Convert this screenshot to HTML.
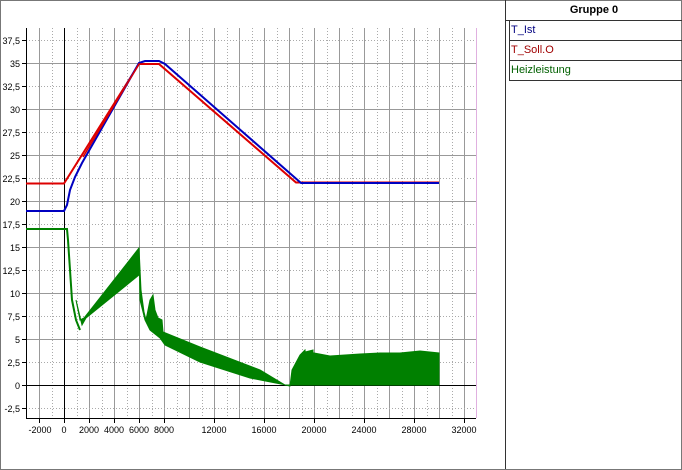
<!DOCTYPE html>
<html><head><style>
body{margin:0;width:682px;height:470px;background:#fff;overflow:hidden;font-family:"Liberation Sans",sans-serif;}
.frame{position:absolute;left:0;top:0;width:680px;height:468px;border:1px solid #777;}
.leg{position:absolute;left:505px;top:0;width:176px;height:469px;border-left:1px solid #333;}
.hd{height:20px;line-height:20px;text-align:center;font-weight:bold;font-size:11px;border-bottom:1px solid #333;}
.row{margin-left:3px;height:19px;line-height:19px;font-size:11px;border-bottom:1px solid #333;border-left:1px solid #333;padding-left:1px;}
</style></head><body>
<div class="frame"></div>
<svg width="682" height="470" style="position:absolute;left:0;top:0" font-family="Liberation Sans" font-size="9">
<g id="grid" stroke-width="1">
<!-- vertical -->
<g stroke="#999">
<line x1="39.5" y1="28" x2="39.5" y2="418"/><line x1="89.5" y1="28" x2="89.5" y2="418"/><line x1="114.5" y1="28" x2="114.5" y2="418"/><line x1="139.5" y1="28" x2="139.5" y2="418"/><line x1="164.5" y1="28" x2="164.5" y2="418"/><line x1="189.5" y1="28" x2="189.5" y2="418"/><line x1="214.5" y1="28" x2="214.5" y2="418"/><line x1="239.5" y1="28" x2="239.5" y2="418"/><line x1="264.5" y1="28" x2="264.5" y2="418"/><line x1="289.5" y1="28" x2="289.5" y2="418"/><line x1="314.5" y1="28" x2="314.5" y2="418"/><line x1="339.5" y1="28" x2="339.5" y2="418"/><line x1="364.5" y1="28" x2="364.5" y2="418"/><line x1="389.5" y1="28" x2="389.5" y2="418"/><line x1="414.5" y1="28" x2="414.5" y2="418"/><line x1="439.5" y1="28" x2="439.5" y2="418"/><line x1="464.5" y1="28" x2="464.5" y2="418"/>
</g>
<g stroke="#aaa" stroke-dasharray="1,2">
<line x1="52.5" y1="28" x2="52.5" y2="418"/><line x1="77.5" y1="28" x2="77.5" y2="418"/><line x1="102.5" y1="28" x2="102.5" y2="418"/><line x1="127.5" y1="28" x2="127.5" y2="418"/><line x1="152.5" y1="28" x2="152.5" y2="418"/><line x1="177.5" y1="28" x2="177.5" y2="418"/><line x1="202.5" y1="28" x2="202.5" y2="418"/><line x1="227.5" y1="28" x2="227.5" y2="418"/><line x1="252.5" y1="28" x2="252.5" y2="418"/><line x1="277.5" y1="28" x2="277.5" y2="418"/><line x1="302.5" y1="28" x2="302.5" y2="418"/><line x1="327.5" y1="28" x2="327.5" y2="418"/><line x1="352.5" y1="28" x2="352.5" y2="418"/><line x1="377.5" y1="28" x2="377.5" y2="418"/><line x1="402.5" y1="28" x2="402.5" y2="418"/><line x1="427.5" y1="28" x2="427.5" y2="418"/><line x1="452.5" y1="28" x2="452.5" y2="418"/>
</g>
<!-- horizontal -->
<g stroke="#999">
<line x1="26" y1="63.5" x2="476" y2="63.5"/><line x1="26" y1="109.5" x2="476" y2="109.5"/><line x1="26" y1="155.5" x2="476" y2="155.5"/><line x1="26" y1="201.5" x2="476" y2="201.5"/><line x1="26" y1="247.5" x2="476" y2="247.5"/><line x1="26" y1="293.5" x2="476" y2="293.5"/><line x1="26" y1="339.5" x2="476" y2="339.5"/>
</g>
<g stroke="#aaa" stroke-dasharray="1,2">
<line x1="26" y1="40.5" x2="476" y2="40.5"/><line x1="26" y1="86.5" x2="476" y2="86.5"/><line x1="26" y1="132.5" x2="476" y2="132.5"/><line x1="26" y1="178.5" x2="476" y2="178.5"/><line x1="26" y1="224.5" x2="476" y2="224.5"/><line x1="26" y1="270.5" x2="476" y2="270.5"/><line x1="26" y1="316.5" x2="476" y2="316.5"/><line x1="26" y1="362.5" x2="476" y2="362.5"/><line x1="26" y1="408.5" x2="476" y2="408.5"/>
</g>
<line x1="476.5" y1="28" x2="476.5" y2="418" stroke="#e0b0e0"/>
<line x1="64.5" y1="28" x2="64.5" y2="418" stroke="#000"/>
<line x1="26" y1="385.5" x2="476" y2="385.5" stroke="#000"/>
<line x1="26.5" y1="28" x2="26.5" y2="418" stroke="#000"/>
<line x1="26" y1="418.5" x2="476" y2="418.5" stroke="#000"/>
</g>
<!-- y ticks & labels -->
<g stroke="#000">
<line x1="22" y1="40.5" x2="26" y2="40.5"/><line x1="22" y1="63.5" x2="26" y2="63.5"/><line x1="22" y1="86.5" x2="26" y2="86.5"/><line x1="22" y1="109.5" x2="26" y2="109.5"/><line x1="22" y1="132.5" x2="26" y2="132.5"/><line x1="22" y1="155.5" x2="26" y2="155.5"/><line x1="22" y1="178.5" x2="26" y2="178.5"/><line x1="22" y1="201.5" x2="26" y2="201.5"/><line x1="22" y1="224.5" x2="26" y2="224.5"/><line x1="22" y1="247.5" x2="26" y2="247.5"/><line x1="22" y1="270.5" x2="26" y2="270.5"/><line x1="22" y1="293.5" x2="26" y2="293.5"/><line x1="22" y1="316.5" x2="26" y2="316.5"/><line x1="22" y1="339.5" x2="26" y2="339.5"/><line x1="22" y1="362.5" x2="26" y2="362.5"/><line x1="22" y1="385.5" x2="26" y2="385.5"/><line x1="22" y1="408.5" x2="26" y2="408.5"/>
</g>
<g text-anchor="end">
<text x="20" y="44">37,5</text><text x="20" y="67">35</text><text x="20" y="90">32,5</text><text x="20" y="113">30</text><text x="20" y="136">27,5</text><text x="20" y="159">25</text><text x="20" y="182">22,5</text><text x="20" y="205">20</text><text x="20" y="228">17,5</text><text x="20" y="251">15</text><text x="20" y="274">12,5</text><text x="20" y="297">10</text><text x="20" y="320">7,5</text><text x="20" y="343">5</text><text x="20" y="366">2,5</text><text x="20" y="389">0</text><text x="20" y="412">-2,5</text>
</g>
<g stroke="#000">
<line x1="39.5" y1="418" x2="39.5" y2="423"/><line x1="64.5" y1="418" x2="64.5" y2="423"/><line x1="89.5" y1="418" x2="89.5" y2="423"/><line x1="114.5" y1="418" x2="114.5" y2="423"/><line x1="139.5" y1="418" x2="139.5" y2="423"/><line x1="164.5" y1="418" x2="164.5" y2="423"/><line x1="214.5" y1="418" x2="214.5" y2="423"/><line x1="264.5" y1="418" x2="264.5" y2="423"/><line x1="314.5" y1="418" x2="314.5" y2="423"/><line x1="364.5" y1="418" x2="364.5" y2="423"/><line x1="414.5" y1="418" x2="414.5" y2="423"/><line x1="464.5" y1="418" x2="464.5" y2="423"/>
</g>
<g text-anchor="middle">
<text x="40" y="433">-2000</text><text x="64" y="433">0</text><text x="89" y="433">2000</text><text x="114" y="433">4000</text><text x="139" y="433">6000</text><text x="164" y="433">8000</text><text x="214" y="433">12000</text><text x="264" y="433">16000</text><text x="314" y="433">20000</text><text x="364" y="433">24000</text><text x="414" y="433">28000</text><text x="464" y="433">32000</text>
</g>
<!-- green -->
<g fill="#008000" stroke="#008000" stroke-width="1">
<polyline fill="none" stroke-width="2" points="26,229 67,229 68,240 72,300 76,320 80,330"/>
<polygon points="76,300 80,320 84,318 139,248 139,275 86,318 82,325"/>
<polygon points="139,248 141,290 144,312 146,320 150,300 153,295 155,310 158,318 162,320 163,332 200,347 260,370 285,385 290,386 292,370 300,355 305,350 306,360 312,385 300,385 286,385 250,378 200,362 165,345 160,338 150,330 145,320 140,300"/>
<polygon points="314,385 314,353 330,356 360,354 380,353 400,353 420,351 439,353 439,385"/>
<polygon points="300,370 305,352 313,350 313,385 296,385"/>
</g>
<!-- red -->
<polyline fill="none" stroke="#d00" stroke-width="2" points="26,183.5 64,183.5 139,64 159,64 296,182.5 439,182.5"/>
<!-- blue -->
<polyline fill="none" stroke="#0000c0" stroke-width="2" points="26,211 64,211 67,205 70,190 75,177 82,163 139,63 145,61 159,61 165,64 301,183 439,183"/>
<polyline fill="none" stroke="#d00" stroke-width="1.5" points="83,157 139,64 159,64 296,182.5"/>
</svg>
<div class="leg">
<div class="hd">Gruppe 0</div>
<div class="row" style="color:#000080">T_Ist</div>
<div class="row" style="color:#a00000">T_Soll.O</div>
<div class="row" style="color:#006000">Heizleistung</div>
</div>
</body></html>
